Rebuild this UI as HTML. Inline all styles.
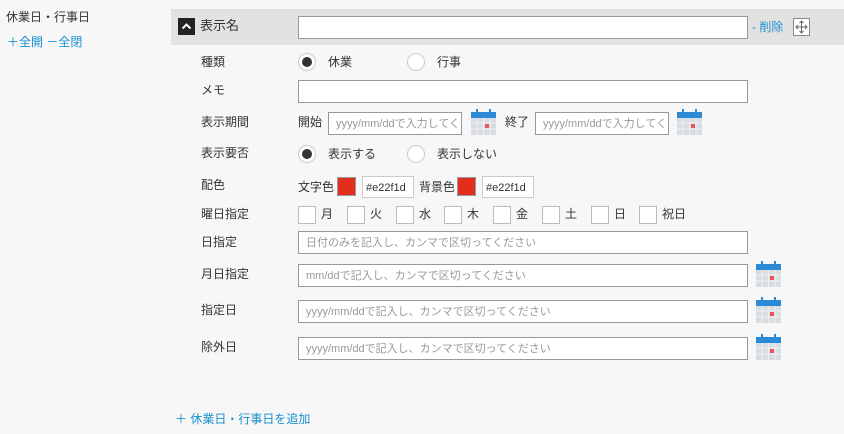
<!DOCTYPE html>
<html><head><meta charset="utf-8"><style>
*{box-sizing:border-box;margin:0;padding:0}
body{width:844px;height:434px;background:#f7f7f7;font-family:"Liberation Sans","Noto Sans CJK JP",sans-serif;font-size:12px;color:#333;position:relative;overflow:hidden}
.a{position:absolute;line-height:14px}
.lbl{position:absolute;left:201px;font-size:12px;line-height:14px}
.in{position:absolute;background:#fff;border:1px solid #999;height:23px;font-size:11px;color:#999;padding-left:7px;display:flex;align-items:center;white-space:nowrap;overflow:hidden;line-height:12px}
.blue{color:#1a8fd0}
.rad{position:absolute;width:18px;height:18px;border-radius:50%;background:#fff;border:1px solid #ccc}
.rad.on::after{content:"";position:absolute;left:3px;top:3px;width:10px;height:10px;border-radius:50%;background:#333}
.cb{position:absolute;width:18px;height:18px;background:#fff;border:1px solid #bbb}
.cal{position:absolute;width:25px;height:26px}
</style></head><body>
<div class="a" style="left:6px;top:10px;font-size:12px">休業日・行事日</div>
<div class="a blue" style="left:7px;top:35px;font-size:12px">＋全開 －全閉</div>
<div class="a" style="left:171px;top:9px;width:673px;height:36px;background:#e2e2e2"></div>
<div class="a" style="left:178px;top:18px;width:17px;height:17px;background:#222"><svg width="17" height="17"><path d="M4.5 10.5 L8.5 6.5 L12.5 10.5" stroke="#fff" stroke-width="2" fill="none"/></svg></div>
<div class="a" style="left:200px;top:18px;font-size:13px;line-height:15px">表示名</div>
<div class="in" style="left:298px;top:16px;width:450px"></div>
<div class="a blue" style="left:752px;top:20px;font-size:12px">- 削除</div>
<div class="a" style="left:793px;top:18px;width:17px;height:18px;background:#fff;border:1px solid #888"><svg width="15" height="16"><path d="M7.5 2v12M2 8h11M5.5 4l2-2 2 2M5.5 12l2 2 2-2M4 6l-2 2 2 2M11 6l2 2-2 2" stroke="#666" stroke-width="1" fill="none"/></svg></div>

<div class="lbl" style="top:55px">種類</div>
<div class="rad on" style="left:298px;top:53px"></div><div class="a" style="left:328px;top:55px">休業</div>
<div class="rad" style="left:407px;top:53px"></div><div class="a" style="left:437px;top:55px">行事</div>

<div class="lbl" style="top:83px">メモ</div>
<div class="in" style="left:298px;top:80px;width:450px"></div>

<div class="lbl" style="top:115px">表示期間</div>
<div class="a" style="left:298px;top:115px">開始</div>
<div class="in" style="left:328px;top:112px;width:134px">yyyy/mm/ddで入力してく</div>
<svg class="cal" style="left:471px;top:109px" viewBox="0 0 25 26"><rect x="0" y="3" width="25" height="23" fill="#d8dde2"/><rect x="0" y="3" width="25" height="6" fill="#2a8ad6"/><rect x="5" y="0" width="2" height="6" fill="#2a8ad6"/><rect x="18" y="0" width="2" height="6" fill="#2a8ad6"/><path d="M0 14h25M0 20h25M6 9v17M12.5 9v17M19 9v17" stroke="#eef0f2" stroke-width="1"/><rect x="14" y="15" width="4" height="4" fill="#e55"/></svg>
<div class="a" style="left:505px;top:115px">終了</div>
<div class="in" style="left:535px;top:112px;width:134px">yyyy/mm/ddで入力してく</div>
<svg class="cal" style="left:677px;top:109px" viewBox="0 0 25 26"><rect x="0" y="3" width="25" height="23" fill="#d8dde2"/><rect x="0" y="3" width="25" height="6" fill="#2a8ad6"/><rect x="5" y="0" width="2" height="6" fill="#2a8ad6"/><rect x="18" y="0" width="2" height="6" fill="#2a8ad6"/><path d="M0 14h25M0 20h25M6 9v17M12.5 9v17M19 9v17" stroke="#eef0f2" stroke-width="1"/><rect x="14" y="15" width="4" height="4" fill="#e55"/></svg>

<div class="lbl" style="top:146px">表示要否</div>
<div class="rad on" style="left:298px;top:145px"></div><div class="a" style="left:328px;top:147px">表示する</div>
<div class="rad" style="left:407px;top:145px"></div><div class="a" style="left:437px;top:147px">表示しない</div>

<div class="lbl" style="top:178px">配色</div>
<div class="a" style="left:298px;top:180px">文字色</div>
<div class="a" style="left:337px;top:177px;width:19px;height:19px;background:#e22f1d;border:1px solid #999"></div>
<div class="a" style="left:362px;top:176px;width:52px;height:22px;background:#fff;border:1px solid #ccc;font-size:11px;padding:4px 0 0 3px">#e22f1d</div>
<div class="a" style="left:419px;top:180px">背景色</div>
<div class="a" style="left:457px;top:177px;width:19px;height:19px;background:#e22f1d;border:1px solid #999"></div>
<div class="a" style="left:482px;top:176px;width:52px;height:22px;background:#fff;border:1px solid #ccc;font-size:11px;padding:4px 0 0 3px">#e22f1d</div>

<div class="lbl" style="top:207px">曜日指定</div>
<div class="cb" style="left:298px;top:206px"></div><div class="a" style="left:321px;top:207px">月</div>
<div class="cb" style="left:347px;top:206px"></div><div class="a" style="left:370px;top:207px">火</div>
<div class="cb" style="left:396px;top:206px"></div><div class="a" style="left:419px;top:207px">水</div>
<div class="cb" style="left:444px;top:206px"></div><div class="a" style="left:467px;top:207px">木</div>
<div class="cb" style="left:493px;top:206px"></div><div class="a" style="left:516px;top:207px">金</div>
<div class="cb" style="left:542px;top:206px"></div><div class="a" style="left:565px;top:207px">土</div>
<div class="cb" style="left:591px;top:206px"></div><div class="a" style="left:614px;top:207px">日</div>
<div class="cb" style="left:639px;top:206px"></div><div class="a" style="left:662px;top:207px">祝日</div>

<div class="lbl" style="top:235px">日指定</div>
<div class="in" style="left:298px;top:231px;width:450px">日付のみを記入し、カンマで区切ってください</div>

<div class="lbl" style="top:267px">月日指定</div>
<div class="in" style="left:298px;top:264px;width:450px">mm/ddで記入し、カンマで区切ってください</div>
<svg class="cal" style="left:756px;top:261px" viewBox="0 0 25 26"><rect x="0" y="3" width="25" height="23" fill="#d8dde2"/><rect x="0" y="3" width="25" height="6" fill="#2a8ad6"/><rect x="5" y="0" width="2" height="6" fill="#2a8ad6"/><rect x="18" y="0" width="2" height="6" fill="#2a8ad6"/><path d="M0 14h25M0 20h25M6 9v17M12.5 9v17M19 9v17" stroke="#eef0f2" stroke-width="1"/><rect x="14" y="15" width="4" height="4" fill="#e55"/></svg>

<div class="lbl" style="top:303px">指定日</div>
<div class="in" style="left:298px;top:300px;width:450px">yyyy/mm/ddで記入し、カンマで区切ってください</div>
<svg class="cal" style="left:756px;top:297px" viewBox="0 0 25 26"><rect x="0" y="3" width="25" height="23" fill="#d8dde2"/><rect x="0" y="3" width="25" height="6" fill="#2a8ad6"/><rect x="5" y="0" width="2" height="6" fill="#2a8ad6"/><rect x="18" y="0" width="2" height="6" fill="#2a8ad6"/><path d="M0 14h25M0 20h25M6 9v17M12.5 9v17M19 9v17" stroke="#eef0f2" stroke-width="1"/><rect x="14" y="15" width="4" height="4" fill="#e55"/></svg>

<div class="lbl" style="top:340px">除外日</div>
<div class="in" style="left:298px;top:337px;width:450px">yyyy/mm/ddで記入し、カンマで区切ってください</div>
<svg class="cal" style="left:756px;top:334px" viewBox="0 0 25 26"><rect x="0" y="3" width="25" height="23" fill="#d8dde2"/><rect x="0" y="3" width="25" height="6" fill="#2a8ad6"/><rect x="5" y="0" width="2" height="6" fill="#2a8ad6"/><rect x="18" y="0" width="2" height="6" fill="#2a8ad6"/><path d="M0 14h25M0 20h25M6 9v17M12.5 9v17M19 9v17" stroke="#eef0f2" stroke-width="1"/><rect x="14" y="15" width="4" height="4" fill="#e55"/></svg>

<div class="a blue" style="left:175px;top:412px;font-size:12px">＋ 休業日・行事日を追加</div>
</body></html>
